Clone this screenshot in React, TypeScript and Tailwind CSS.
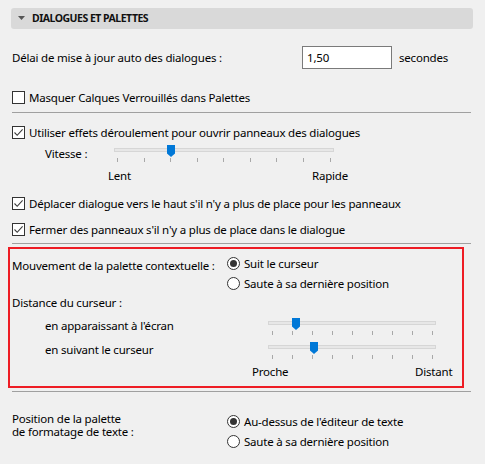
import React from "react";

const Check = ({ checked }: { checked: boolean }) => (
  <div className="w-[13px] h-[13px] border border-[#333333] bg-white flex items-center justify-center shrink-0">
    {checked && (
      <svg width="11" height="11" viewBox="0 0 11 11">
        <path d="M1.5 5.5 L4.2 8.3 L9.6 2.4" fill="none" stroke="#3c3c3c" strokeWidth="1.1" />
      </svg>
    )}
  </div>
);

const Radio = ({ on }: { on: boolean }) => (
  <div className="w-[13px] h-[13px] rounded-full border border-[#333333] bg-white flex items-center justify-center shrink-0">
    {on && <div className="w-[7px] h-[7px] rounded-full bg-[#333333]" />}
  </div>
);

const Slider = ({ width, thumb, ticks }: { width: number; thumb: number; ticks: number[] }) => (
  <div className="relative h-[17px] shrink-0" style={{ width }}>
    <div className="absolute left-0 right-0 top-[3px] h-[4px] bg-[#e7e7e7] border border-[#d6d6d6]" />
    <svg className="absolute top-0" style={{ left: thumb }} width="8" height="12" viewBox="0 0 8 12">
      <path d="M0 0 H8 V8.5 L4 12 L0 8.5 Z" fill="#0078d7" />
    </svg>
    {ticks.map((t) => (
      <div key={t} className="absolute top-[13px] w-[1px] h-[4px] bg-[#a8a8a8]" style={{ left: t }} />
    ))}
  </div>
);

const Sep = () => <div className="h-[1px] w-[459px] bg-[#a0a0a0]" />;

export default function App() {
  return (
    <div
      className="w-[485px] h-[464px] bg-[#f0f0f0] text-[11.5px] tracking-[-0.2px] text-[#000000] leading-[15px] overflow-hidden pt-[8px] whitespace-nowrap"
      style={{ fontFamily: '"Noto Sans", "Open Sans", sans-serif' }}
    >
      <div className="ml-[11px] w-[462px] h-[21px] rounded-[3px] bg-[#d9d9d9] flex items-center pl-[7px]">
        <svg width="7" height="5" viewBox="0 0 7 5">
          <path d="M0 0 H7 L3.5 4 Z" fill="#555555" />
        </svg>
        <span className="ml-[7px] font-bold text-[10.5px] tracking-[-0.5px] text-[#111111]">DIALOGUES ET PALETTES</span>
      </div>

      <div className="pl-[12px]">
        <div className="mt-[17px] h-[23px] flex items-center">
          <span className="w-[290px]">Délai de mise à jour auto des dialogues :</span>
          <div className="w-[90px] h-[23px] border border-[#7a7a7a] bg-white flex items-center pl-[4px]">1,50</div>
          <span className="ml-[7px]">secondes</span>
        </div>

        <div className="mt-[21px] h-[15px] flex items-center gap-[4px]">
          <Check checked={false} />
          <span>Masquer Calques Verrouillés dans Palettes</span>
        </div>

        <div className="mt-[7px]"><Sep /></div>

        <div className="mt-[12px] h-[15px] flex items-center gap-[4px]">
          <Check checked />
          <span>Utiliser effets déroulement pour ouvrir panneaux des dialogues</span>
        </div>

        <div className="mt-[5px] flex items-start">
          <span className="ml-[33px] w-[69px] mt-[1px]">Vitesse :</span>
          <Slider width={220} thumb={53} ticks={[3, 30, 56, 83, 109, 136, 162, 189, 216]} />
        </div>
        <div className="mt-[6px] flex h-[15px]">
          <span className="ml-[96px] w-[204px]">Lent</span>
          <span>Rapide</span>
        </div>

        <div className="mt-[13px] h-[15px] flex items-center gap-[4px]">
          <Check checked />
          <span>Déplacer dialogue vers le haut s'il n'y a plus de place pour les panneaux</span>
        </div>
        <div className="mt-[11px] h-[15px] flex items-center gap-[4px]">
          <Check checked />
          <span>Fermer des panneaux s'il n'y a plus de place dans le dialogue</span>
        </div>

        <div className="mt-[6px]"><Sep /></div>
      </div>

      <div className="ml-[8px] mt-[3px] w-[456px] h-[141px] border-2 border-[#ee1c24] pl-[2px]">
        <div className="mt-[7px] flex">
          <span className="w-[215px] mt-[2px] h-[15px]">Mouvement de la palette contextuelle :</span>
          <div className="flex flex-col gap-[5px]">
            <div className="flex items-center gap-[4px] h-[15px]"><Radio on /><span>Suit le curseur</span></div>
            <div className="flex items-center gap-[4px] h-[15px]"><Radio on={false} /><span>Saute à sa dernière position</span></div>
          </div>
        </div>
        <div className="mt-[4px] h-[15px]">Distance du curseur :</div>
        <div className="mt-[8px] flex">
          <span className="ml-[33px] w-[223px] h-[15px]">en apparaissant à l'écran</span>
          <Slider width={168} thumb={24} ticks={[4, 24, 44, 64, 84, 104, 124, 144, 164]} />
        </div>
        <div className="mt-[7px] flex">
          <span className="ml-[33px] w-[223px] h-[15px]">en suivant le curseur</span>
          <Slider width={168} thumb={42} ticks={[4, 24, 44, 64, 84, 104, 124, 144, 164]} />
        </div>
        <div className="mt-[5px] flex h-[15px]">
          <span className="ml-[240px] w-[163px]">Proche</span>
          <span>Distant</span>
        </div>
      </div>

      <div className="pl-[12px] mt-[3px]">
        <Sep />
        <div className="mt-[20px] flex">
          <div className="w-[215px] leading-[13px]">
            <div className="h-[13px]">Position de la palette</div>
            <div className="h-[13px]">de formatage de texte :</div>
          </div>
          <div className="flex flex-col gap-[5px] mt-[2px]">
            <div className="flex items-center gap-[4px] h-[15px]"><Radio on /><span>Au-dessus de l'éditeur de texte</span></div>
            <div className="flex items-center gap-[4px] h-[15px]"><Radio on={false} /><span>Saute à sa dernière position</span></div>
          </div>
        </div>
      </div>
    </div>
  );
}
